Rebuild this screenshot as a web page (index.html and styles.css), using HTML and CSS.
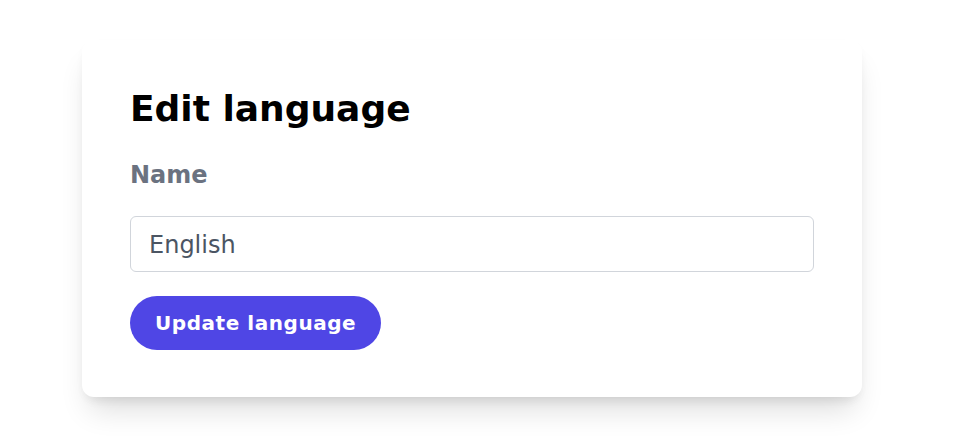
FILE: index.html
```html
<!DOCTYPE html>
<html lang="en">
<head>
<meta charset="utf-8">
<title>Edit language</title>
<link rel="stylesheet" href="styles.css">
</head>
<body>
<main class="page">
  <form class="card">
    <h1 class="title">Edit language</h1>
    <label class="label" for="name">Name</label>
    <input class="input" id="name" type="text" value="English">
    <div class="actions">
      <button class="btn" type="button">Update language</button>
    </div>
  </form>
</main>
</body>
</html>
```
FILE: styles.css
```css
* { box-sizing: border-box; }
html, body { margin: 0; padding: 0; background: #ffffff; }
body { font-family: "DejaVu Sans", sans-serif; min-height: 448px; }
.page { padding: 40px 0 0 82px; min-height: 448px; }
.card {
  width: 780px;
  background: #ffffff;
  border-radius: 12px;
  padding: 48px 48px 47px;
  box-shadow: 0 20px 30px -8px rgba(0,0,0,0.14), 0 8px 12px -6px rgba(0,0,0,0.08), 0 4px 12px -2px rgba(0,0,0,0.03);
  display: flex;
  flex-direction: column;
}
.title {
  margin: 0;
  font-size: 36px;
  line-height: 40px;
  font-weight: 700;
  color: #000000;
  position: relative;
  top: 1px;
}
.label {
  margin-top: 31px;
  font-size: 24px;
  line-height: 32px;
  font-weight: 700;
  color: #6b7280;
}
.input {
  margin-top: 25px;
  width: 100%;
  height: 56px;
  border: 1px solid #d1d5db;
  border-radius: 6px;
  padding: 2px 18px 0;
  font-family: "DejaVu Sans", sans-serif;
  font-size: 24px;
  color: #4b5563;
  background: #ffffff;
  outline: none;
}
.actions { margin-top: 24px; display: flex; }
.btn {
  height: 54px;
  padding: 0 25px;
  border: none;
  border-radius: 9999px;
  background: #4f46e5;
  color: #ffffff;
  font-family: "DejaVu Sans", sans-serif;
  font-size: 20px;
  font-weight: 700;
  letter-spacing: 0.55px;
  cursor: pointer;
}
```
